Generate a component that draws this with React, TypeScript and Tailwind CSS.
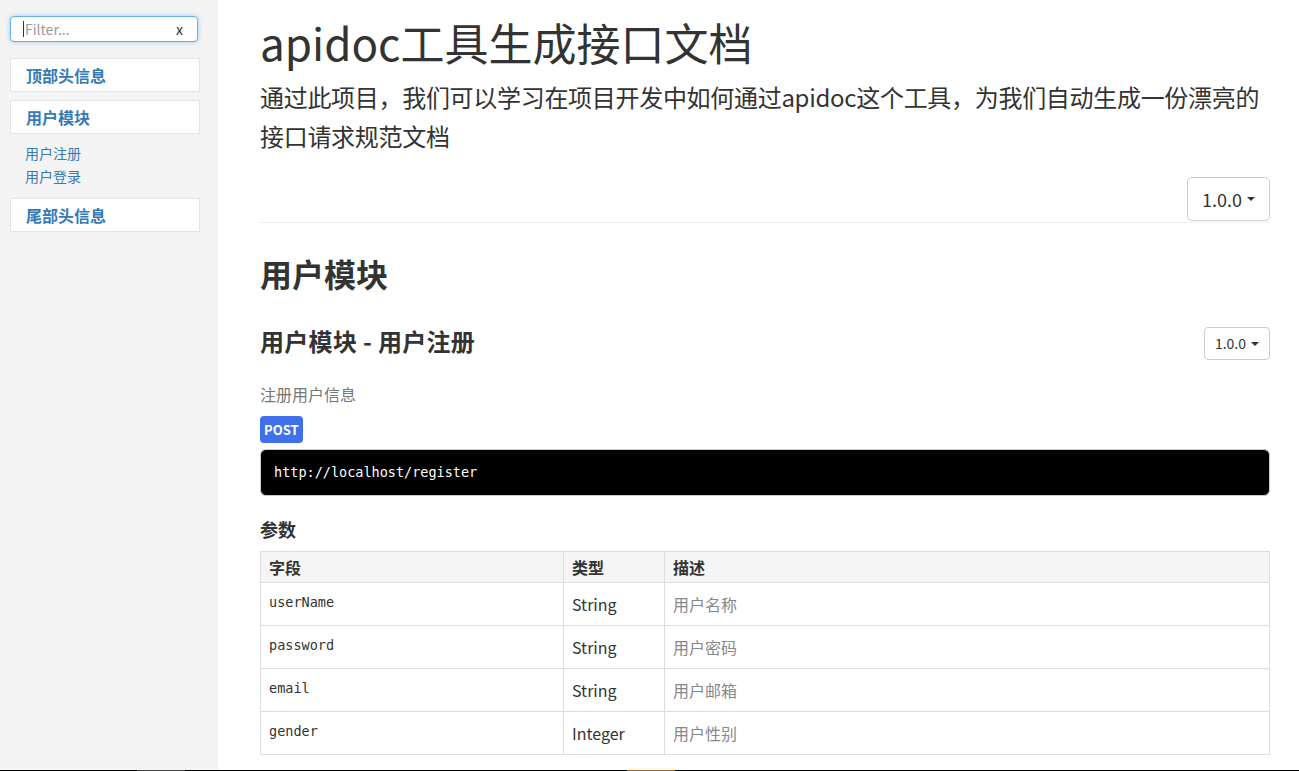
import React from 'react';

const navBox =
  'flex h-[34px] items-center border border-[#e5e5e5] bg-white pl-[15px] text-[16px] font-bold text-[#337ab7]';

const params = [
  { field: 'userName', type: 'String', desc: '用户名称' },
  { field: 'password', type: 'String', desc: '用户密码' },
  { field: 'email', type: 'String', desc: '用户邮箱' },
  { field: 'gender', type: 'Integer', desc: '用户性别' },
];

function Caret() {
  return (
    <span className="ml-[5px] inline-block h-0 w-0 border-x-[4px] border-t-[4px] border-x-transparent border-t-[#333] align-middle" />
  );
}

function Sidebar() {
  return (
    <div className="flex w-[218px] shrink-0 flex-col bg-[#f4f4f4] px-[10px] pt-[16px]">
      <div className="flex h-[26px] w-[188px] items-center justify-between rounded-[4px] border border-[#66afe9] bg-white pl-[12px] pr-[14px] text-[14px] shadow-[0_0_5px_rgba(102,175,233,0.6)]">
        <span className="flex items-center text-[#999]">
          <span className="mr-px h-[16px] w-px bg-[#333]" />
          Filter...
        </span>
        <span className="text-[#333]">x</span>
      </div>
      <div className="mt-[16px] flex w-[190px] flex-col">
        <div className={navBox}>顶部头信息</div>
        <div className={`mt-[8px] ${navBox}`}>用户模块</div>
        <div className="flex flex-col pl-[15px] pt-[8px] pb-[10px] text-[14px] leading-[23px] text-[#337ab7]">
          <span>用户注册</span>
          <span>用户登录</span>
        </div>
        <div className={navBox}>尾部头信息</div>
      </div>
    </div>
  );
}

function Content() {
  return (
    <div className="min-w-0 flex-1 overflow-hidden pl-[42px] pr-[29px] text-[#333]">
      <h1 className="pt-[17px] text-[44px] leading-[50px] font-normal">apidoc工具生成接口文档</h1>
      <p className="mt-[10px] text-[24px] leading-[39px] tracking-[-0.3px]">
        通过此项目，我们可以学习在项目开发中如何通过apidoc这个工具，为我们自动生成一份漂亮的接口请求规范文档
      </p>
      <div className="mt-[22px] flex justify-end border-b border-[#eee] pb-px">
        <button className="flex h-[44px] items-center rounded-[5px] border border-[#ccc] bg-white px-[14px] text-[18px] text-[#333]">
          1.0.0
          <Caret />
        </button>
      </div>

      <h2 className="mt-[30px] text-[32px] leading-[40px] font-bold">用户模块</h2>

      <div className="mt-[31px] flex items-start justify-between">
        <h3 className="text-[24px] leading-[33px] font-bold tracking-[0.3px]">用户模块 - 用户注册</h3>
        <button className="mt-[3px] flex h-[33px] items-center rounded-[4px] border border-[#ccc] bg-white px-[10px] text-[14px] text-[#333]">
          1.0.0
          <Caret />
        </button>
      </div>

      <p className="mt-[24px] text-[16px] leading-[20px] text-[#777]">注册用户信息</p>

      <span className="mt-[12px] inline-flex h-[27px] items-center rounded-[4px] bg-[#4070ec] px-[4px] text-[13px] font-bold text-white">
        POST
      </span>
      <pre className="mt-[6px] flex h-[47px] items-center rounded-[6px] border border-[#ccc] bg-black px-[13px] font-['DejaVu_Sans_Mono',monospace] text-[13.5px] text-white">
        http://localhost/register
      </pre>

      <h4 className="mt-[21px] text-[18px] leading-[24px] font-bold">参数</h4>

      <table className="mt-[10px] w-full border-collapse text-[16px]">
        <thead>
          <tr className="h-[31px] bg-[#f5f5f5] text-left">
            <th className="w-[303px] border border-[#ddd] px-[8px] font-bold">字段</th>
            <th className="w-[101px] border border-[#ddd] px-[8px] font-bold">类型</th>
            <th className="border border-[#ddd] px-[8px] font-bold">描述</th>
          </tr>
        </thead>
        <tbody>
          {params.map((p) => (
            <tr key={p.field} className="h-[43px]">
              <td className="border border-[#ddd] px-[8px] pb-[3px] font-['DejaVu_Sans_Mono',monospace] text-[13.5px]">
                {p.field}
              </td>
              <td className="border border-[#ddd] px-[8px]">{p.type}</td>
              <td className="border border-[#ddd] px-[8px] text-[#888]">{p.desc}</td>
            </tr>
          ))}
        </tbody>
      </table>
    </div>
  );
}

export default function App() {
  return (
    <div className="flex h-[771px] flex-col overflow-hidden bg-white font-['Noto_Sans_CJK_SC','Noto_Sans',sans-serif]">
      <div className="flex min-h-0 flex-1">
        <Sidebar />
        <Content />
      </div>
      <div className="flex h-px shrink-0">
        <div className="w-[137px] bg-black" />
        <div className="w-[48px] bg-[#444]" />
        <div className="w-[442px] bg-black" />
        <div className="w-[48px] bg-[#b5651d]" />
        <div className="flex-1 bg-black" />
      </div>
    </div>
  );
}
